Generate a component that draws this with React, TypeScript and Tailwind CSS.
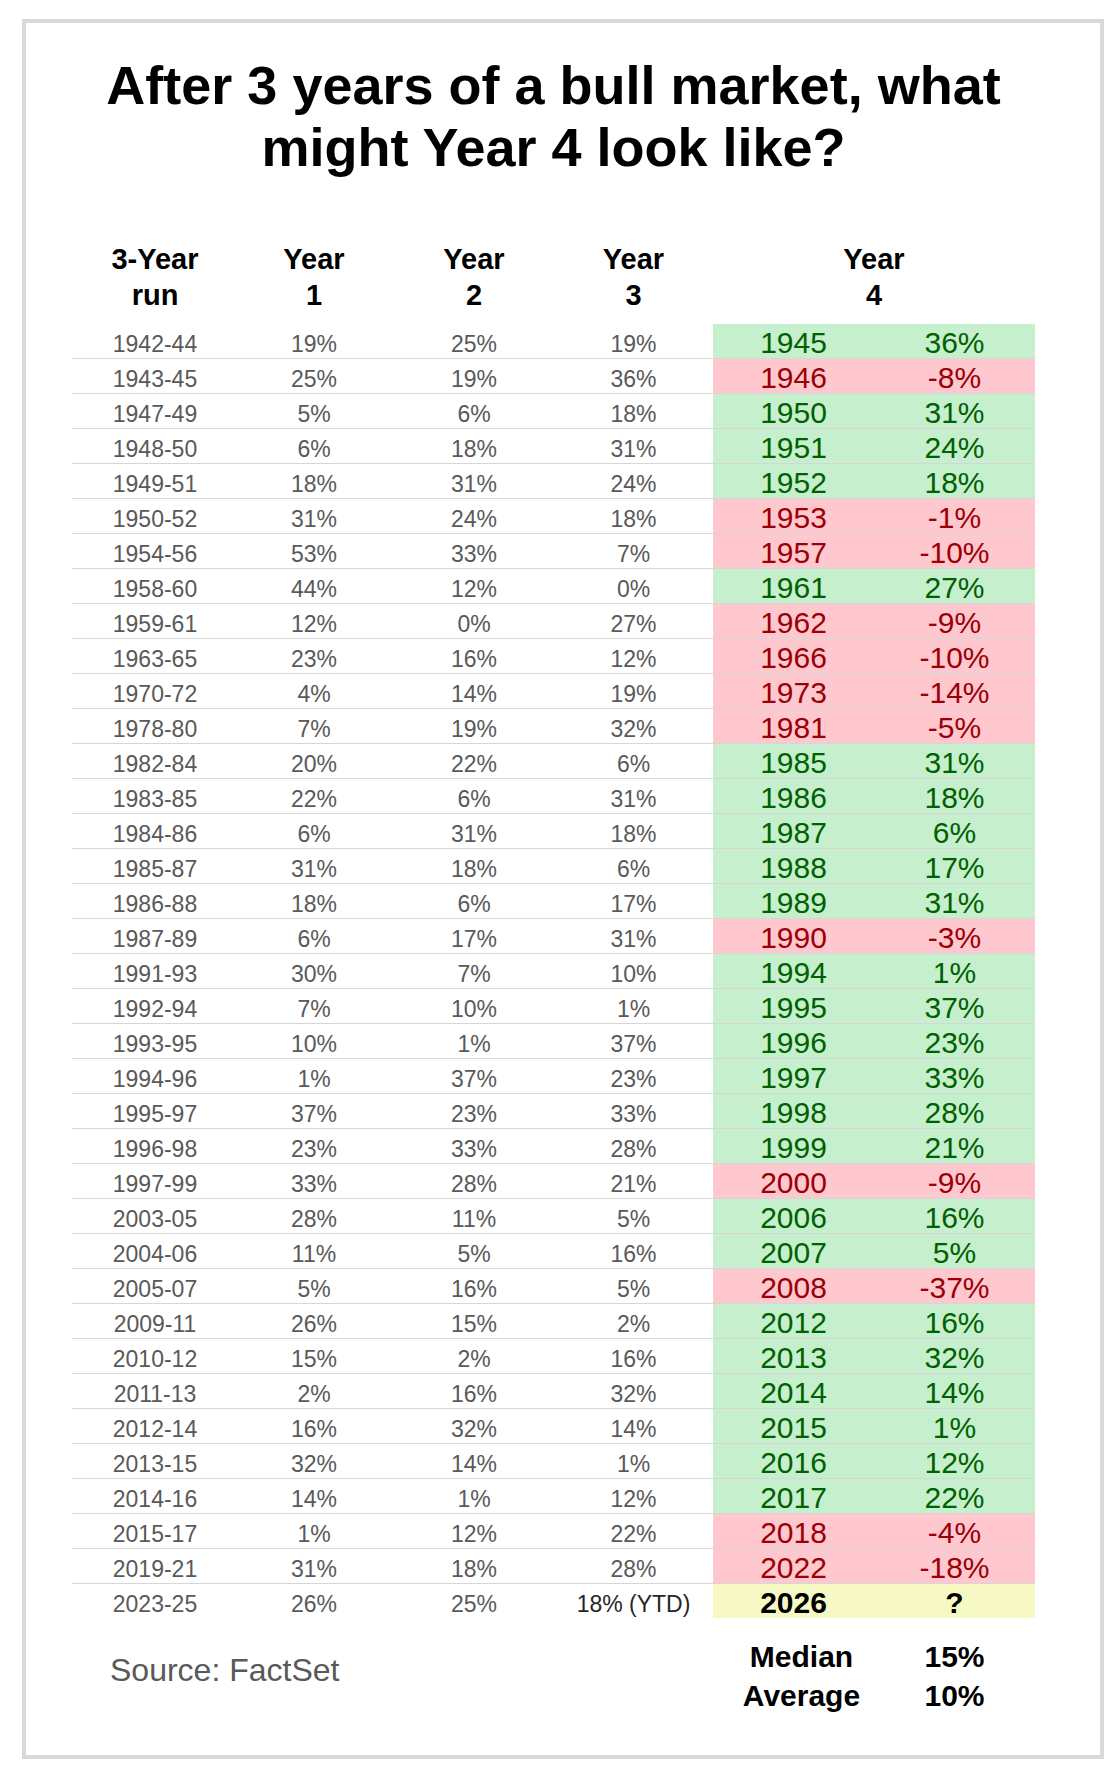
type Tone = "up" | "down" | "open";

interface Run {
  span: string;
  y1: string;
  y2: string;
  y3: string;
  year: string;
  result: string;
  tone: Tone;
}

const runs: Run[] = [
  { span: "1942-44", y1: "19%", y2: "25%", y3: "19%", year: "1945", result: "36%", tone: "up" },
  { span: "1943-45", y1: "25%", y2: "19%", y3: "36%", year: "1946", result: "-8%", tone: "down" },
  { span: "1947-49", y1: "5%", y2: "6%", y3: "18%", year: "1950", result: "31%", tone: "up" },
  { span: "1948-50", y1: "6%", y2: "18%", y3: "31%", year: "1951", result: "24%", tone: "up" },
  { span: "1949-51", y1: "18%", y2: "31%", y3: "24%", year: "1952", result: "18%", tone: "up" },
  { span: "1950-52", y1: "31%", y2: "24%", y3: "18%", year: "1953", result: "-1%", tone: "down" },
  { span: "1954-56", y1: "53%", y2: "33%", y3: "7%", year: "1957", result: "-10%", tone: "down" },
  { span: "1958-60", y1: "44%", y2: "12%", y3: "0%", year: "1961", result: "27%", tone: "up" },
  { span: "1959-61", y1: "12%", y2: "0%", y3: "27%", year: "1962", result: "-9%", tone: "down" },
  { span: "1963-65", y1: "23%", y2: "16%", y3: "12%", year: "1966", result: "-10%", tone: "down" },
  { span: "1970-72", y1: "4%", y2: "14%", y3: "19%", year: "1973", result: "-14%", tone: "down" },
  { span: "1978-80", y1: "7%", y2: "19%", y3: "32%", year: "1981", result: "-5%", tone: "down" },
  { span: "1982-84", y1: "20%", y2: "22%", y3: "6%", year: "1985", result: "31%", tone: "up" },
  { span: "1983-85", y1: "22%", y2: "6%", y3: "31%", year: "1986", result: "18%", tone: "up" },
  { span: "1984-86", y1: "6%", y2: "31%", y3: "18%", year: "1987", result: "6%", tone: "up" },
  { span: "1985-87", y1: "31%", y2: "18%", y3: "6%", year: "1988", result: "17%", tone: "up" },
  { span: "1986-88", y1: "18%", y2: "6%", y3: "17%", year: "1989", result: "31%", tone: "up" },
  { span: "1987-89", y1: "6%", y2: "17%", y3: "31%", year: "1990", result: "-3%", tone: "down" },
  { span: "1991-93", y1: "30%", y2: "7%", y3: "10%", year: "1994", result: "1%", tone: "up" },
  { span: "1992-94", y1: "7%", y2: "10%", y3: "1%", year: "1995", result: "37%", tone: "up" },
  { span: "1993-95", y1: "10%", y2: "1%", y3: "37%", year: "1996", result: "23%", tone: "up" },
  { span: "1994-96", y1: "1%", y2: "37%", y3: "23%", year: "1997", result: "33%", tone: "up" },
  { span: "1995-97", y1: "37%", y2: "23%", y3: "33%", year: "1998", result: "28%", tone: "up" },
  { span: "1996-98", y1: "23%", y2: "33%", y3: "28%", year: "1999", result: "21%", tone: "up" },
  { span: "1997-99", y1: "33%", y2: "28%", y3: "21%", year: "2000", result: "-9%", tone: "down" },
  { span: "2003-05", y1: "28%", y2: "11%", y3: "5%", year: "2006", result: "16%", tone: "up" },
  { span: "2004-06", y1: "11%", y2: "5%", y3: "16%", year: "2007", result: "5%", tone: "up" },
  { span: "2005-07", y1: "5%", y2: "16%", y3: "5%", year: "2008", result: "-37%", tone: "down" },
  { span: "2009-11", y1: "26%", y2: "15%", y3: "2%", year: "2012", result: "16%", tone: "up" },
  { span: "2010-12", y1: "15%", y2: "2%", y3: "16%", year: "2013", result: "32%", tone: "up" },
  { span: "2011-13", y1: "2%", y2: "16%", y3: "32%", year: "2014", result: "14%", tone: "up" },
  { span: "2012-14", y1: "16%", y2: "32%", y3: "14%", year: "2015", result: "1%", tone: "up" },
  { span: "2013-15", y1: "32%", y2: "14%", y3: "1%", year: "2016", result: "12%", tone: "up" },
  { span: "2014-16", y1: "14%", y2: "1%", y3: "12%", year: "2017", result: "22%", tone: "up" },
  { span: "2015-17", y1: "1%", y2: "12%", y3: "22%", year: "2018", result: "-4%", tone: "down" },
  { span: "2019-21", y1: "31%", y2: "18%", y3: "28%", year: "2022", result: "-18%", tone: "down" },
  { span: "2023-25", y1: "26%", y2: "25%", y3: "18% (YTD)", year: "2026", result: "?", tone: "open" },
];

const toneClass: Record<Tone, string> = {
  up: "bg-[#c6efce] text-[#006100]",
  down: "bg-[#ffc7ce] text-[#9c0006]",
  open: "bg-[#f7f9c4] text-black font-bold",
};

const cols = "grid grid-cols-[162px_160px_160px_159px_161px_161px]";

export default function App() {
  return (
    <div
      className="min-h-screen bg-white pt-[19px] pl-[22px]"
      style={{ fontFamily: '"Liberation Sans", Arial, sans-serif' }}
    >
      <div className="w-[1082px] border-4 border-[#d9d9d9] pt-[31px] pb-[40px] pl-[46px]">
        <div className="w-[963px]">
          <h1 className="text-center text-[54px] leading-[62px] font-bold text-black">
            After 3 years of a bull market, what
            <br />
            might Year 4 look like?
          </h1>

          {/* column headings */}
          <div className={`${cols} mt-[63px] text-[29px] leading-[36px] font-bold text-black text-center`}>
            <div className="pl-[4px]">
              3-Year
              <br />
              run
            </div>
            <div>
              Year
              <br />1
            </div>
            <div>
              Year
              <br />2
            </div>
            <div>
              Year
              <br />3
            </div>
            <div className="col-span-2">
              Year
              <br />4
            </div>
          </div>

          <div className="mt-[11px]">
            {runs.map((r, i) => (
              <div
                key={r.span}
                className={`${cols} h-[35px] border-b ${
                  i === runs.length - 1 ? "border-transparent" : "border-[#d6d6d6]"
                }`}
              >
                <div className="flex items-end justify-center pb-[2px] pl-[4px] text-[23px] leading-[23px] text-[#595959]">
                  {r.span}
                </div>
                <div className="flex items-end justify-center pb-[2px] text-[23px] leading-[23px] text-[#595959]">
                  {r.y1}
                </div>
                <div className="flex items-end justify-center pb-[2px] text-[23px] leading-[23px] text-[#595959]">
                  {r.y2}
                </div>
                <div
                  className={`flex items-end justify-center pb-[2px] text-[23px] leading-[23px] ${
                    r.tone === "open" ? "text-[#262626]" : "text-[#595959]"
                  }`}
                >
                  {r.y3}
                </div>
                <div className={`flex items-end justify-center text-[30px] leading-[30px] ${toneClass[r.tone]}`}>
                  {r.year}
                </div>
                <div className={`flex items-end justify-center text-[30px] leading-[30px] ${toneClass[r.tone]}`}>
                  {r.result}
                </div>
              </div>
            ))}
          </div>

          <div className={`${cols} mt-[18px]`}>
            <div className="col-span-4 pl-[38px] pt-[13px] text-[32px] leading-[40px] text-[#595959]">
              Source: FactSet
            </div>
            <div className="pl-[16px] text-center text-[30px] leading-[39px] font-bold text-black">
              Median
              <br />
              Average
            </div>
            <div className="text-center text-[30px] leading-[39px] font-bold text-black">
              15%
              <br />
              10%
            </div>
          </div>
        </div>
      </div>
    </div>
  );
}
